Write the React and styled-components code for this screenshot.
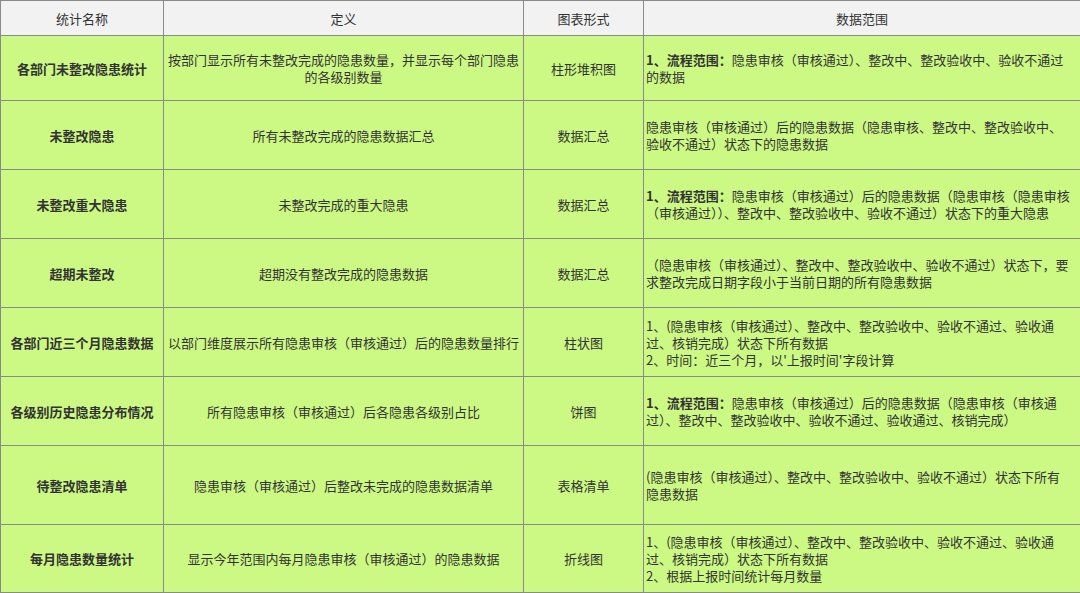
import React from 'react';
import styled, { createGlobalStyle } from 'styled-components';

const Global = createGlobalStyle`
  body { margin: 0; background: #fff; font-family: "Noto Sans CJK SC", "Liberation Sans", sans-serif; }
`;

const Table = styled.table`
  border-collapse: collapse;
  table-layout: fixed;
  width: 1080px;
  font-size: 13px;
  line-height: 17px;
  color: #333;
`;

const Head = styled.th`
  height: 34px;
  background: #f2f2f2;
  border: 1px solid #8a8a8a;
  font-weight: normal;
  text-align: center;
  padding: 0;
`;

const Row = styled.tr`
  height: ${p => p.h}px;
`;

const Cell = styled.td`
  background: #ccf884;
  border: 1px solid #8a8a8a;
  text-align: ${p => (p.left ? 'left' : 'center')};
  font-weight: ${p => (p.bold ? 'bold' : 'normal')};
  padding: ${p => (p.left ? '0 8px 0 2px' : '0 4px')};
  vertical-align: middle;
`;

const rows = [
  ['各部门未整改隐患统计', '按部门显示所有未整改完成的隐患数量，并显示每个部门隐患的各级别数量', '柱形堆积图', <><b>1、流程范围：</b>隐患审核（审核通过）、整改中、整改验收中、验收不通过的数据</>, 65],
  ['未整改隐患', '所有未整改完成的隐患数据汇总', '数据汇总', '隐患审核（审核通过）后的隐患数据（隐患审核、整改中、整改验收中、验收不通过）状态下的隐患数据', 69],
  ['未整改重大隐患', '未整改完成的重大隐患', '数据汇总', <><b>1、流程范围：</b>隐患审核（审核通过）后的隐患数据（隐患审核（隐患审核（审核通过））、整改中、整改验收中、验收不通过）状态下的重大隐患</>, 69],
  ['超期未整改', '超期没有整改完成的隐患数据', '数据汇总', '（隐患审核（审核通过）、整改中、整改验收中、验收不通过）状态下，要求整改完成日期字段小于当前日期的所有隐患数据', 69],
  ['各部门近三个月隐患数据', '以部门维度展示所有隐患审核（审核通过）后的隐患数量排行', '柱状图', <>1、(隐患审核（审核通过）、整改中、整改验收中、验收不通过、验收通过、核销完成）状态下所有数据<br />2、时间：近三个月，以'上报时间'字段计算</>, 69],
  ['各级别历史隐患分布情况', '所有隐患审核（审核通过）后各隐患各级别占比', '饼图', <><b>1、流程范围：</b>隐患审核（审核通过）后的隐患数据（隐患审核（审核通过）、整改中、整改验收中、验收不通过、验收通过、核销完成）</>, 69],
  ['待整改隐患清单', '隐患审核（审核通过）后整改未完成的隐患数据清单', '表格清单', '(隐患审核（审核通过）、整改中、整改验收中、验收不通过）状态下所有隐患数据', 79],
  ['每月隐患数量统计', '显示今年范围内每月隐患审核（审核通过）的隐患数据', '折线图', <>1、(隐患审核（审核通过）、整改中、整改验收中、验收不通过、验收通过、核销完成）状态下所有数据<br />2、根据上报时间统计每月数量</>, 68],
];

export default function App() {
  return (
    <>
      <Global />
      <Table>
        <colgroup>
          <col style={{ width: 163 }} />
          <col style={{ width: 360 }} />
          <col style={{ width: 120 }} />
          <col style={{ width: 437 }} />
        </colgroup>
        <thead>
          <tr>
            <Head>统计名称</Head>
            <Head>定义</Head>
            <Head>图表形式</Head>
            <Head>数据范围</Head>
          </tr>
        </thead>
        <tbody>
          {rows.map(([name, def, chart, range, h]) => (
            <Row key={name} h={h}>
              <Cell bold>{name}</Cell>
              <Cell>{def}</Cell>
              <Cell>{chart}</Cell>
              <Cell left>{range}</Cell>
            </Row>
          ))}
        </tbody>
      </Table>
    </>
  );
}
